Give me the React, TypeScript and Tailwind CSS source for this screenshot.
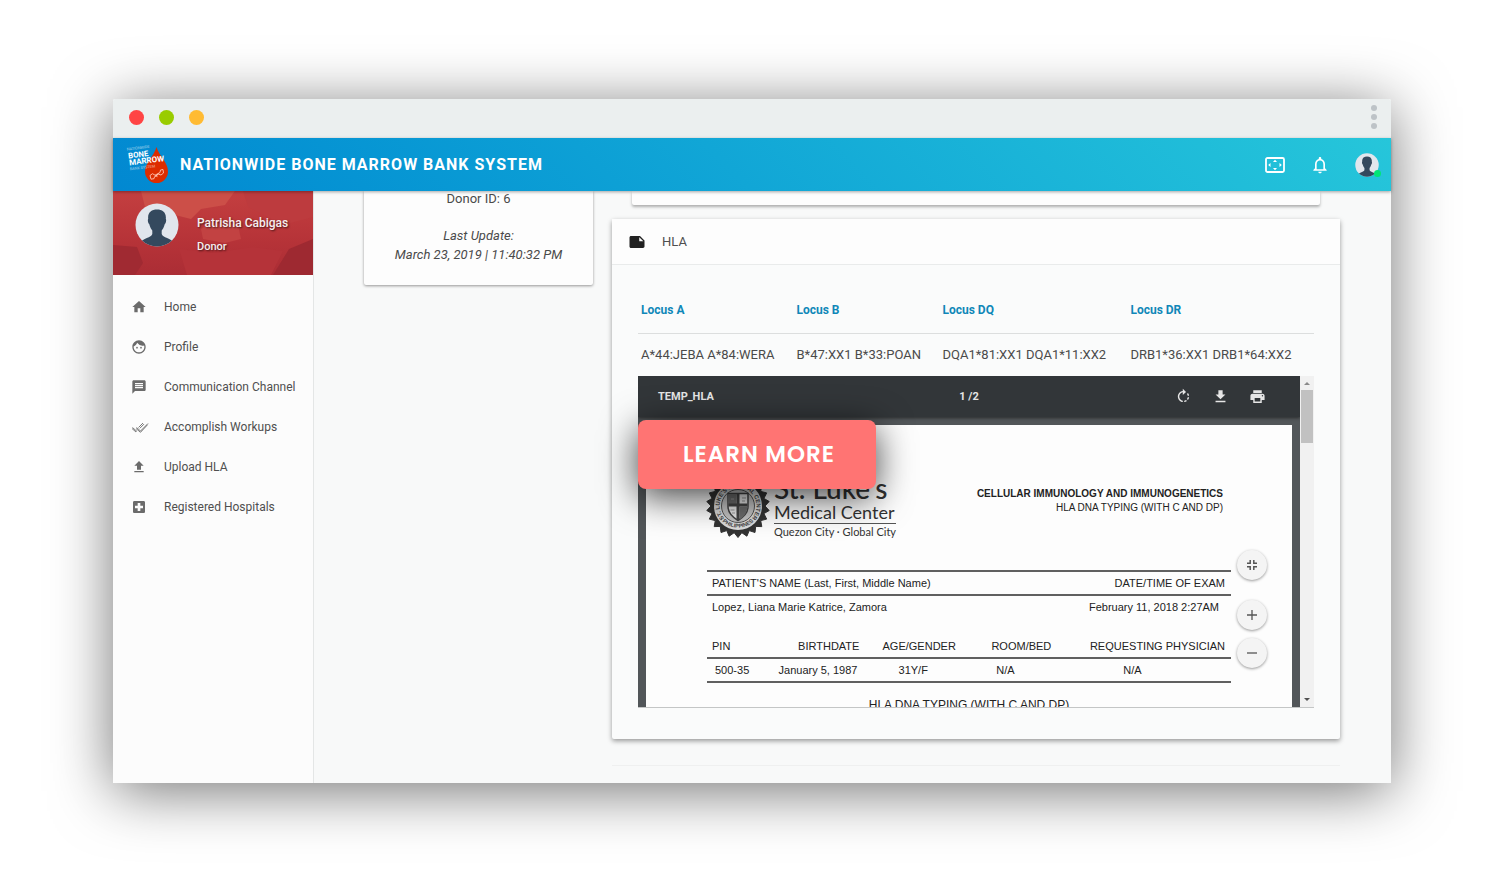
import { useId, type ReactNode } from "react";
import {
  MdFace,
  MdFileDownload,
  MdFileUpload,
  MdHome,
  MdLocalHospital,
  MdMessage,
  MdNote,
  MdNotificationsNone,
  MdPrint,
  MdRotateRight,
} from "react-icons/md";

function Avatar({ className }: { className: string }) {
  const clip = useId();
  return (
    <svg viewBox="0 0 44 44" className={className} aria-hidden="true">
      <defs>
        <clipPath id={clip}>
          <circle cx="22" cy="22" r="21.5" />
        </clipPath>
      </defs>
      <circle cx="22" cy="22" r="21.5" fill="#e1e6ed" />
      <path
        clipPath={`url(#${clip})`}
        fill="#34495e"
        d="M13.2 16C12.4 9.500 16.500 6.500 22 6.500S31.600 9.500 30.800 16C31.600 16.500 31 20.500 29.800 21C29 24.500 27.500 26.500 26.700 27.500V31C27.500 35 36 34.500 40 41V46H4V41C8 34.500 16.500 35 17.300 31V27.500C16.500 26.500 15 24.500 14.200 21C13 20.500 12.400 16.500 13.200 16Z"
      />
    </svg>
  );
}

function BrandLogo() {
  return (
    <svg viewBox="0 0 44 42" className="h-[42px] w-11 shrink-0" aria-hidden="true">
      <path d="M30.500 3C33 12 42 18 42 27.500A11.500 11.500 0 0 1 19 27.500C19 19 28 12 30.500 3Z" fill="#dd2c00" />
      <g fill="#ffffff" fontFamily="Roboto, sans-serif" transform="rotate(-7 2 14)">
        <text x="2" y="6.500" fontSize="3.800" opacity=".6">NATIONWIDE</text>
        <text x="2.500" y="14.500" fontSize="7.800" fontWeight="700">BONE</text>
        <text x="2.500" y="21.500" fontSize="8" fontWeight="700">MARROW</text>
        <text x="2.500" y="26.500" fontSize="3.800" opacity=".6">BANK SYSTEM</text>
      </g>
      <g fill="none" stroke="#ffc4b3" strokeWidth=".9">
        <path d="M24 31.500l2.500-1.800 2.500 1.500 5-2.700.5-2.500 2.500-.5.500 3.500-2.500 2-2.500-.8-4 2.500-.5 2-3 .5z" />
        <path d="M29 31.500l2.500 1.200M32.500 29.500l-3 3" />
      </g>
    </svg>
  );
}

function OverscanIcon() {
  return (
    <svg viewBox="0 0 20 16" className="h-4 w-5" aria-hidden="true">
      <rect x="1" y="1" width="18" height="14" rx="1.500" fill="none" stroke="currentColor" strokeWidth="1.800" />
      <path d="M8 5L10 2.800L12 5ZM8 11L10 13.200L12 11ZM5.500 6L3.200 8L5.500 10ZM14.500 6L16.800 8L14.500 10Z" fill="currentColor" />
    </svg>
  );
}

function DoubleCheck() {
  return (
    <svg viewBox="0 0 18 18" className="size-[18px]" fill="none" stroke="currentColor" strokeWidth=".9" aria-hidden="true">
      <path d="M1.500 9.500l4.500 4M1 10.500l4 3.500M5.500 9.500l4 3.500 7.500-7.500M5 10.500l4.500 3.800 7-7.500M7.500 9.500l4.500-4.500M8.800 10.300l4.200-4.200" />
    </svg>
  );
}

function Seal() {
  const top = useId();
  const bottom = useId();
  const points = Array.from({ length: 44 }, (_, i) => {
    const r = i % 2 ? 27 : 31.5;
    const a = (i * Math.PI) / 22;
    return `${(32 + r * Math.sin(a)).toFixed(1)},${(32 - r * Math.cos(a)).toFixed(1)}`;
  }).join(" ");
  return (
    <svg viewBox="0 0 64 64" className="size-16 shrink-0" aria-hidden="true">
      <polygon points={points} fill="#333333" stroke="#333333" strokeWidth="1" strokeLinejoin="round" />
      <circle cx="32" cy="32" r="24" fill="#dcdcdc" />
      <circle cx="32" cy="32" r="16.500" fill="#c4c4c4" stroke="#555555" />
      <path id={top} d="M17.500 43.500A18.500 18.500 0 1 1 46.500 43.500" fill="none" />
      <path id={bottom} d="M13.500 44A22.500 22.500 0 0 0 50.500 44" fill="none" />
      <g fontSize="5.800" fontWeight="700" fill="#444444" textAnchor="middle" fontFamily="Liberation Sans, sans-serif">
        <text>
          <textPath href={`#${top}`} startOffset="50%">ST. LUKE'S MEDICAL CENTER</textPath>
        </text>
        <text fontSize="5.500">
          <textPath href={`#${bottom}`} startOffset="50%">· PHILIPPINES ·</textPath>
        </text>
      </g>
      <path d="M22 19.500h20v13c0 7-5 11-10 14-5-3-10-7-10-14z" fill="#e8e8e8" stroke="#444444" strokeWidth="1.500" />
      <path d="M22.500 20h8v10h-8zM33.500 32.500h8c-.5 6-3 10-8 13z" fill="#6d6d6d" />
      <path d="M30.500 20h3v26h-3zM22.500 29.500h19v3h-19z" fill="#444444" />
      <path d="M25 25h3M36 24h4M36 27h3M24.500 36h4M26 39h3" stroke="#999999" />
    </svg>
  );
}

function FitIcon() {
  return (
    <svg viewBox="0 0 12 12" className="size-3" fill="none" stroke="currentColor" strokeWidth="1.500" aria-hidden="true">
      <path d="M1 4.200H4.200V1M7.800 1V4.200H11M1 7.800H4.200V11M7.800 11V7.800H11" />
    </svg>
  );
}

const navItems: { label: string; icon: ReactNode }[] = [
  { label: "Home", icon: <MdHome /> },
  { label: "Profile", icon: <MdFace /> },
  { label: "Communication Channel", icon: <MdMessage /> },
  { label: "Accomplish Workups", icon: <DoubleCheck /> },
  { label: "Upload HLA", icon: <MdFileUpload /> },
  { label: "Registered Hospitals", icon: <MdLocalHospital /> },
];

const loci = [
  { name: "Locus A", value: "A*44:JEBA A*84:WERA", width: "w-[23%]" },
  { name: "Locus B", value: "B*47:XX1 B*33:POAN", width: "w-[21.6%]" },
  { name: "Locus DQ", value: "DQA1*81:XX1 DQA1*11:XX2", width: "w-[27.8%]" },
  { name: "Locus DR", value: "DRB1*36:XX1 DRB1*64:XX2", width: "w-auto" },
];

function TitleBar() {
  return (
    <div className="flex h-[39px] shrink-0 items-center justify-between rounded-t-[2px] bg-[#ebefef] pr-[14px] pl-4">
      <div className="flex gap-[15px] pb-[3px]">
        <span className="size-[15px] rounded-full bg-[#ff4444]" />
        <span className="size-[15px] rounded-full bg-[#99cc00]" />
        <span className="size-[15px] rounded-full bg-[#ffbb33]" />
      </div>
      <div className="flex flex-col gap-[3px] pb-[3px]">
        <span className="size-[6px] rounded-full bg-[#bdc3c7]" />
        <span className="size-[6px] rounded-full bg-[#bdc3c7]" />
        <span className="size-[6px] rounded-full bg-[#bdc3c7]" />
      </div>
    </div>
  );
}

function AppBar() {
  return (
    <header className="z-10 flex h-[53px] shrink-0 items-center bg-linear-45 from-[#0288d1] to-[#26c6da] pr-3 pl-[13px] text-white shadow-[0_1px_3px_rgba(0,0,0,0.35)]">
      <BrandLogo />
      <h1 className="ml-[10px] flex-1 text-[16px] font-bold tracking-[1px]">NATIONWIDE BONE MARROW BANK SYSTEM</h1>
      <div className="flex items-center gap-[25px]">
        <button type="button" aria-label="Fullscreen">
          <OverscanIcon />
        </button>
        <button type="button" aria-label="Notifications">
          <MdNotificationsNone className="size-5" />
        </button>
        <button type="button" aria-label="Account" className="relative">
          <Avatar className="size-6" />
          <span className="absolute -right-[2px] bottom-0 size-[7px] rounded-full bg-[#00e676]" />
        </button>
      </div>
    </header>
  );
}

function Sidebar() {
  return (
    <aside className="w-[201px] shrink-0 border-r border-[#e4e6e6] bg-[#fcfcfc]">
      <div className="relative h-[84px] overflow-hidden bg-[#b93338]">
        <svg viewBox="0 0 200 84" preserveAspectRatio="none" className="absolute inset-0 size-full" aria-hidden="true">
          <defs>
            <linearGradient id="panel-base" x1="0" y1="0" x2="0" y2="1">
              <stop offset="0" stopColor="#c43f40" />
              <stop offset=".6" stopColor="#b63338" />
              <stop offset="1" stopColor="#ab2d35" />
            </linearGradient>
          </defs>
          <rect width="200" height="84" fill="url(#panel-base)" />
          <path d="M28 0H122L112 14L88 18L78 28L62 24L45 14L32 16Z" fill="#cc4f48" />
          <path d="M88 38L98 32L125 34L128 48L112 52L90 48Z" fill="#c24242" />
          <path d="M130 0H200V26L170 34L135 16Z" fill="#bd3b3e" />
          <path d="M0 54L24 56L30 72L22 84H0Z" fill="#a02a32" />
          <path d="M160 84L176 58L200 48V84Z" fill="#9e2931" />
          <path d="M66 58L100 62L140 56L170 60L158 84H74Z" fill="#b53339" />
        </svg>
        <div className="relative flex pt-3 pl-[22px] text-[12px] font-medium text-[#f6eeee] [text-shadow:1px_1px_2px_rgba(0,0,0,0.6)]">
          <Avatar className="size-11 shrink-0" />
          <div className="ml-[18px] pt-[9px] leading-[23px]">
            <p>Patrisha Cabigas</p>
            <p className="text-[11px]">Donor</p>
          </div>
        </div>
      </div>
      <nav className="pt-3">
        <ul>
          {navItems.map((item) => (
            <li key={item.label}>
              <a href="#" className="flex h-10 items-center pl-[18px] text-[12px] text-[#4f4f4f]">
                <span className="flex w-[33px] items-center text-[16px] text-[#6b6b6b]">{item.icon}</span>
                {item.label}
              </a>
            </li>
          ))}
        </ul>
      </nav>
    </aside>
  );
}

function ReportPage() {
  return (
    <div className="mx-2 bg-[#fdfdfd] px-[61px] pt-[49px] font-['Liberation_Sans',Arial,sans-serif] text-[11px] leading-[14px] text-[#222222]">
      <div className="flex items-start justify-between">
        <div className="-ml-px flex gap-1">
          <Seal />
          <div className="font-[Lato,sans-serif] text-[#333333]">
            <p className="text-[28px] leading-[28px] font-medium">St. Luke's</p>
            <p className="border-b border-[#555555] text-[18px] leading-[21px]">Medical Center</p>
            <p className="text-[11px] leading-[16px]">Quezon City · Global City</p>
          </div>
        </div>
        <div className="pt-[13px] pr-2 text-right text-[10px]">
          <p className="font-bold">CELLULAR IMMUNOLOGY AND IMMUNOGENETICS</p>
          <p>HLA DNA TYPING (WITH C AND DP)</p>
        </div>
      </div>
      <table className="mt-[30px] w-full">
        <thead>
          <tr className="h-6 border-y-2 border-[#606060]">
            <th className="pl-[5px] text-left font-normal">PATIENT'S NAME (Last, First, Middle Name)</th>
            <th className="pr-[6px] text-right font-normal">DATE/TIME OF EXAM</th>
          </tr>
        </thead>
        <tbody>
          <tr className="h-6">
            <td className="pb-[2px] pl-[5px]">Lopez, Liana Marie Katrice, Zamora</td>
            <td className="pr-3 pb-[2px] text-right">February 11, 2018 2:27AM</td>
          </tr>
        </tbody>
      </table>
      <table className="mt-[15px] w-full table-fixed">
        <thead>
          <tr className="h-6 border-b-2 border-[#606060]">
            <th className="w-[11%] pl-[5px] text-left font-normal">PIN</th>
            <th className="w-[20%] pr-[10px] text-right font-normal">BIRTHDATE</th>
            <th className="w-[19%] text-center font-normal">AGE/GENDER</th>
            <th className="w-[20%] text-center font-normal">ROOM/BED</th>
            <th className="pr-[6px] text-right font-normal">REQUESTING PHYSICIAN</th>
          </tr>
        </thead>
        <tbody>
          <tr className="h-6 border-b-2 border-[#606060]">
            <td className="pl-2">500-35</td>
            <td className="pr-3 text-right">January 5, 1987</td>
            <td className="pr-3 text-center">31Y/F</td>
            <td className="pr-8 text-center">N/A</td>
            <td className="pr-10 text-center">N/A</td>
          </tr>
        </tbody>
      </table>
      <p className="pt-[15px] text-center text-[12px]">HLA DNA TYPING (WITH C AND DP)</p>
    </div>
  );
}

const roundButton =
  "flex size-[30px] items-center justify-center rounded-full bg-[#f4f4f4] text-[#555555] shadow-[0_1px_3px_rgba(0,0,0,0.4)]";

function Viewer() {
  return (
    <div className="relative">
      <div className="flex h-[332px] border-b border-[#c4c6c6]">
        <div className="relative flex-1 overflow-hidden bg-[#525659]">
          <div className="grid h-[41px] grid-cols-3 items-center bg-[#323639] px-5 text-[11px] font-bold text-[#e6e6e6] shadow-[0_1px_3px_rgba(0,0,0,0.5)]">
            <span className="pt-[2px]">TEMP_HLA</span>
            <span className="pt-[2px] text-center">1 /2</span>
            <div className="flex justify-end gap-5 pr-[14px] text-[17px]">
              <button type="button" aria-label="Rotate clockwise"><MdRotateRight /></button>
              <button type="button" aria-label="Download"><MdFileDownload /></button>
              <button type="button" aria-label="Print"><MdPrint /></button>
            </div>
          </div>
          <div className="h-2" />
          <ReportPage />
          <div className="absolute right-[33px] bottom-[39px] flex flex-col gap-2">
            <button type="button" aria-label="Fit to page" className={`${roundButton} mb-3`}>
              <FitIcon />
            </button>
            <button type="button" aria-label="Zoom in" className={roundButton}>
              <svg viewBox="0 0 12 12" className="size-3" stroke="currentColor" strokeWidth="1.300" aria-hidden="true">
                <path d="M1 6H11M6 1V11" />
              </svg>
            </button>
            <button type="button" aria-label="Zoom out" className={roundButton}>
              <svg viewBox="0 0 12 12" className="size-3" stroke="currentColor" strokeWidth="1.300" aria-hidden="true">
                <path d="M1 6H11" />
              </svg>
            </button>
          </div>
        </div>
        <div className="flex w-[14px] flex-col items-center bg-[#f1f1f1]">
          <svg viewBox="0 0 14 14" className="size-[14px]" aria-hidden="true">
            <path d="M4 9L7 6L10 9Z" fill="#8a8a8a" />
          </svg>
          <span className="h-[53px] w-3 bg-[#c1c1c1]" />
          <svg viewBox="0 0 14 14" className="mt-auto size-[14px]" aria-hidden="true">
            <path d="M4 5L7 8L10 5Z" fill="#505050" />
          </svg>
        </div>
      </div>
      <a
        href="#"
        className="absolute top-11 left-0 flex h-[69px] w-[238px] items-center justify-center rounded-lg bg-[#ff7473] pl-1 font-[Poppins,Inter,sans-serif] text-[23px] font-semibold tracking-[1px] text-white shadow-[0_8px_36px_rgba(0,0,0,0.75)]"
      >
        LEARN MORE
      </a>
    </div>
  );
}

function HlaCard() {
  return (
    <section className="mt-[14px] rounded-[2px] bg-[#fafbfb] shadow-[0_2px_5px_rgba(0,0,0,0.4)]">
      <div className="flex h-[46px] items-center gap-4 border-b border-[#e9ebeb] bg-[#fdfdfd] pl-4 text-[#212121]">
        <MdNote className="size-[18px]" />
        <h2 className="text-[13px] text-[#4f4f4f]">HLA</h2>
      </div>
      <div className="px-[26px] pt-[23px] pb-[31px]">
        <table className="w-full table-fixed text-left">
          <thead>
            <tr className="h-[45px] border-b border-[#dcdede] text-[12px] text-[#0f87b8]">
              {loci.map((locus) => (
                <th key={locus.name} className={`${locus.width} pl-[3px] font-bold`}>{locus.name}</th>
              ))}
            </tr>
          </thead>
          <tbody>
            <tr className="h-[43px] text-[13px] text-[#4a4a4a]">
              {loci.map((locus) => (
                <td key={locus.name} className="pl-[3px] whitespace-nowrap">{locus.value}</td>
              ))}
            </tr>
          </tbody>
        </table>
        <Viewer />
      </div>
    </section>
  );
}

export default function App() {
  return (
    <div className="flex min-h-screen flex-col bg-white px-[113px] pt-[99px] pb-[100px] font-[Roboto,sans-serif]">
      <div className="flex flex-1 flex-col rounded-t-[2px] shadow-[0_8px_60px_rgba(0,0,0,0.55)]">
        <TitleBar />
        <AppBar />
        <div className="flex flex-1 bg-[#f8f9f9]">
          <Sidebar />
          <main className="flex flex-1 items-start gap-[19px] pr-[51px] pl-[50px]">
            <section className="w-[229px] shrink-0 rounded-b-[2px] bg-[#fdfdfd] pb-[21px] text-center text-[13px] leading-[19px] text-[#4a4a4a] shadow-[0_1px_3px_rgba(0,0,0,0.4)]">
              <p className="-mt-[2px]">Donor ID: 6</p>
              <p className="mt-[18px] italic">Last Update:</p>
              <p className="italic">March 23, 2019 | 11:40:32 PM</p>
            </section>
            <div className="flex-1">
              <div className="mx-5 h-[14px] rounded-b-[2px] bg-[#fdfdfd] shadow-[0_2px_3px_rgba(0,0,0,0.3)]" />
              <HlaCard />
              <hr className="mt-[26px] border-[#eff0f0]" />
            </div>
          </main>
        </div>
      </div>
    </div>
  );
}
